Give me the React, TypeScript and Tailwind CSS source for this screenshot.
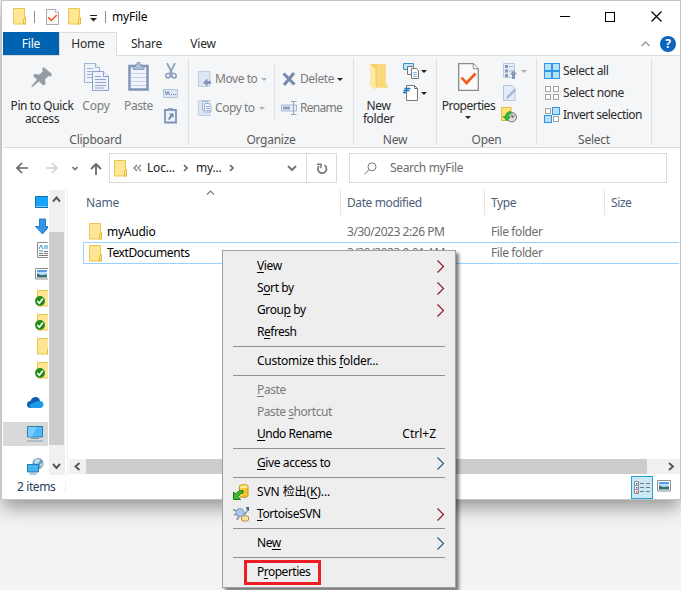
import React from 'react';
import clsx from 'clsx';

const FolderIcon = ({ className }: { className?: string }) => (
  <svg className={clsx('shrink-0', className)} width="14" height="17" viewBox="0 0 14 17">
    <path d="M.5.500h11v9h1v6.500H.5z" fill="#ffe694" stroke="#e9c750" />
    <path d="M10.500 16v-4.500l1-1.500h1v6z" fill="#ffe694" stroke="#e3b83c" />
  </svg>
);

const Caret = ({ className }: { className?: string }) => (
  <svg className={clsx('shrink-0', className)} width="6" height="3" viewBox="0 0 6 3">
    <path d="M0 0h6L3 3z" fill="currentColor" />
  </svg>
);

const PropertiesIcon = ({ width, height }: { width: number; height: number }) => (
  <svg width={width} height={height} viewBox="0 0 21 28" preserveAspectRatio="none">
    <path d="M.7.700h14.600l5 5v21.600H.7z" fill="#fafafa" stroke="#8a8a8a" strokeWidth="1.300" />
    <path d="M15.300.700v5h5" fill="#fff" stroke="#8a8a8a" />
    <path d="M3.500 14.500l5 5.500 9-9.500" fill="none" stroke="#f4591b" strokeWidth="2.600" />
  </svg>
);

const PinIcon = () => (
  <svg width="22" height="22" viewBox="0 0 22 22">
    <path d="M12.500 1l8.500 7-1 2.500-2.500-.500-3.500 3.500.5 4.500-2 1.500-4.500-4L1.500 21H.5v-1l5.500-6.500L2 10l1.500-2 5 .5 3.500-3.500-1-2z" fill="#929da6" />
  </svg>
);

const CopyIcon = () => (
  <svg width="25" height="28" viewBox="0 0 25 28">
    <g fill="#eef3fb" stroke="#9fb2d3">
      <path d="M.5.500h11l4 4V19.500H.5z" />
      <path d="M11.500.500v4h4" />
      <path d="M3 5.500h6M3 8.500h6M3 11.500h5M3 14.500h5" />
      <path d="M8.500 8.500h11l5 5v14h-16z" stroke="#8ea3c8" />
      <path d="M19.500 8.500v5h5M11 13.500h6M11 16.500h11M11 19.500h11M11 22.500h11M11 25h9" stroke="#8ea3c8" />
    </g>
  </svg>
);

const PasteIcon = () => (
  <svg width="21" height="29" viewBox="0 0 21 29">
    <path d="M1.500 4h18v23.500h-18z" fill="#f1f5fb" stroke="#8194b8" strokeWidth="2.500" />
    <path d="M5 4.500h2.500V2.500h1.500V.500h3v2h1.500v2H16v3H5z" fill="#aebcd4" stroke="#8194b8" strokeWidth=".8" />
    <path d="M3 11.500h15M3 15.500h15M3 19.500h15M3 23.500h15" stroke="#c4d0e3" />
  </svg>
);

const CutIcon = () => (
  <svg width="12" height="16" viewBox="0 0 12 16">
    <g fill="none" stroke="#8ea0c0">
      <path d="M2 0l5.500 11M10 0L4.500 11" strokeWidth="1.800" />
      <circle cx="3" cy="12.700" r="2.200" strokeWidth="1.700" />
      <circle cx="9" cy="12.700" r="2.200" strokeWidth="1.700" />
    </g>
  </svg>
);

const CopyPathIcon = () => (
  <svg width="15" height="9" viewBox="0 0 15 9">
    <path d="M.5.500h14v8H.5z" fill="#dde6f3" stroke="#b5c4dc" />
    <path d="M2 2l1.500 4L5 2.500 6.500 6" fill="none" stroke="#6e82a8" />
    <path d="M8 5.500h1M10 5.500h1M12 5.500h1" stroke="#6e82a8" />
  </svg>
);

const PasteShortcutIcon = () => (
  <svg width="13" height="17" viewBox="0 0 13 17">
    <path d="M1 3h11v12.500H1z" fill="#eef3fa" stroke="#8194b8" strokeWidth="1.800" />
    <path d="M4 1h5v3H4z" fill="#8fa1c2" />
    <path d="M5 6.500h4.500V11L8 9.500 5.500 13 4 12l2.500-4z" fill="#7186ac" />
  </svg>
);

const MoveIcon = () => (
  <svg width="14" height="16" viewBox="0 0 14 16">
    <path d="M.5.500h11.500V15.500H.5z" fill="#dce6f4" stroke="#bfcde3" />
    <path d="M5 11.500l4.500-4v2.500H13v3H9.500v2.500z" fill="#8397bb" />
  </svg>
);

const CopyToIcon = () => (
  <svg width="14" height="16" viewBox="0 0 14 16">
    <path d="M.5.500h11.500V15.500H.5z" fill="#dce6f4" stroke="#bfcde3" />
    <path d="M4.500 1.500h5v9h-5z" fill="#f2f6fc" stroke="#9fb2d3" />
    <path d="M6.500 3.500h4.500l2 2v6.500H6.500z" fill="#f2f6fc" stroke="#9fb2d3" />
    <path d="M8 6.500h4M8 8.500h4M8 10.500h4" stroke="#9fb2d3" />
  </svg>
);

const DeleteIcon = () => (
  <svg width="14" height="14" viewBox="0 0 14 14">
    <path d="M1.500 1.500l11 11M12 1L2 13" stroke="#7589ad" strokeWidth="3" />
  </svg>
);

const RenameIcon = () => (
  <svg width="16" height="14" viewBox="0 0 16 14">
    <path d="M.5 4h15v6H.5z" fill="#e8eef7" stroke="#a5b6d2" />
    <path d="M2 5.500h7v3H2z" fill="#8ea2c4" />
    <path d="M10 .500h2.500v13H10M15.500.500h-3v13h3" fill="none" stroke="#8ea2c4" />
  </svg>
);

const NewFolderIcon = () => (
  <svg width="20" height="28" viewBox="0 0 20 28">
    <path d="M1 1h15.500v18l2.500 5.500H8L1 22z" fill="#f4cf68" />
    <path d="M8 1h8.500v18l2.500 5.500H8z" fill="#f9d979" />
    <path d="M1 1l5.500 5v21.500L1 23z" fill="#ffe9a6" />
  </svg>
);

const NewItemIcon = () => (
  <svg width="16" height="16" viewBox="0 0 16 16">
    <path d="M.5.500h10v6H.5z" fill="#bfe3f7" stroke="#3b95bd" />
    <path d="M4.500 3.500h5l2 2v6h-7z" fill="#f6f6f6" stroke="#777" />
    <path d="M8.500 5.500h5l2 2v8h-7z" fill="#fff" stroke="#777" />
    <path d="M10 9.500h4M10 11.500h4M10 13.500h4" stroke="#87bde6" />
  </svg>
);

const EasyAccessIcon = () => (
  <svg width="16" height="16" viewBox="0 0 16 16">
    <path d="M3.500.500h8l3 3v12h-11z" fill="#fff" stroke="#777" />
    <path d="M11.500.500v3h3" fill="none" stroke="#777" />
    <path d="M1.500 3.500h6M.5 5.500h6M0 7.500h4" stroke="#1b72c0" strokeWidth="1.300" />
  </svg>
);

const OpenIcon = () => (
  <svg width="14" height="16" viewBox="0 0 14 16">
    <path d="M.5.500h11v14H.5z" fill="#e7eef7" stroke="#b9c8df" />
    <path d="M2 2h3v3H2zM2 6.500h3v3H2zM2 11h3v3H2z" fill="#8397bb" />
    <path d="M6 3.500h4M6 8h3" stroke="#a7b7d2" />
    <path d="M10.500 7l3.500 4.500h-2V16H9v-4.500H7z" fill="#8397bb" />
  </svg>
);

const EditIcon = () => (
  <svg width="14" height="16" viewBox="0 0 14 16">
    <path d="M.5.500h8.500l3 3v12H.5z" fill="#e4ecf7" stroke="#b4c4dd" />
    <path d="M3 14l1-3 7.500-7.500 1.500 2L5.500 13z" fill="#a4b6d3" />
  </svg>
);

const HistoryIcon = () => (
  <svg width="16" height="16" viewBox="0 0 16 16">
    <path d="M.5.500h9.500V13.500H.5z" fill="#ffe17b" stroke="#e3bd3c" />
    <circle cx="10.800" cy="10.200" r="4.700" fill="#ddd" stroke="#777" />
    <path d="M11 7.500v3l2.500-2" fill="none" stroke="#555" />
    <path d="M10 4.500C6 4.500 4.500 7 4.500 9.500H2L6 14l3.500-4.500H7.500c0-2 1-2.500 2.500-2.500z" fill="#35b53a" stroke="#1a8d22" strokeWidth=".6" />
  </svg>
);

const squares = [
  [0, 0],
  [8, 0],
  [0, 8],
  [8, 8],
];

const SelectIcon = ({ picked }: { picked: boolean[] }) => (
  <svg width="16" height="16" viewBox="0 0 16 16">
    {squares.map(([x, y], i) =>
      picked[i] ? (
        <rect key={i} x={x + 0.5} y={y + 0.5} width="7" height="7" fill="#b9e0fb" stroke="#2f96e6" />
      ) : (
        <rect key={i} x={x + 1.5} y={y + 1.5} width="5" height="5" fill="#fcfcfc" stroke="#a3a3a3" />
      )
    )}
  </svg>
);

const MonitorIcon = () => (
  <svg width="17" height="16" viewBox="0 0 17 16">
    <path d="M.5.500h15v10.500H.5z" fill="#4cb9fb" stroke="#2f7fae" />
    <path d="M1 1h9L5 10.500H1z" fill="#79cdff" />
    <path d="M4 12.500h8" stroke="#7c99aa" />
    <path d="M0 15h16" stroke="#7ca5c2" />
  </svg>
);

const PictureIcon = () => (
  <svg className="shrink-0" width="14" height="12" viewBox="0 0 14 12">
    <path d="M.5.500h13v10.500H.5z" fill="#fff" stroke="#8f8f8f" />
    <path d="M2 2h10v7.500H2z" fill="#b9def9" />
    <path d="M2 2h10v2H2z" fill="#5b9bea" />
    <path d="M2 5.500l4 1.500 6-.5v3H2z" fill="#3d7270" />
  </svg>
);

const SyncedFolderIcon = () => (
  <svg className="shrink-0" width="16" height="17" viewBox="0 0 16 17">
    <path d="M2.500.500h13v15.500h-13z" fill="#ffe694" stroke="#ecc846" />
    <circle cx="5" cy="11" r="5" fill="#238a17" />
    <path d="M2.300 11l2 2.200L8 8.500" fill="none" stroke="#fff" strokeWidth="1.700" />
  </svg>
);

const CloudIcon = () => (
  <svg width="17" height="11" viewBox="0 0 17 11">
    <path d="M3.500 11C1 11 0 9.500 0 7.500 0 5.500 1.500 4 3.500 4 4.500 1 6.500 0 8.500 0 11 0 12.500 1.500 13 4L9 8z" fill="#0a5fb4" />
    <path d="M4 11l-2-3 7-3.500 3.500-.5C15 4 16.500 5.500 16.500 7.500S15 11 13 11z" fill="#1f9be8" />
  </svg>
);

const NetworkIcon = () => (
  <svg width="17" height="17" viewBox="0 0 17 17">
    <circle cx="11" cy="5.500" r="5.500" fill="#6b9fbd" />
    <path d="M8 2c2-2 5-1 5 1l-3 3-3-1zM13 6l3-1-2 5z" fill="#bfe2ef" />
    <path d="M.5 6.500h11v7.500H.5z" fill="#43b4f4" stroke="#2b78a6" />
    <path d="M2.500 16h7" stroke="#6d91aa" />
  </svg>
);

const SvnCheckoutIcon = () => (
  <svg width="16" height="16" viewBox="0 0 16 16">
    <path d="M6.500 2.500c0-2.500 8.500-2.500 8.500 0v9c0 2.500-8.500 2.500-8.500 0z" fill="#f7c52d" stroke="#c98f12" />
    <ellipse cx="10.750" cy="2.700" rx="3.700" ry="1.500" fill="#fdeb9a" />
    <path d="M8.500 5v7" stroke="#fde68a" strokeWidth="1.500" />
    <path d="M.5 15.500V8l2 2c2-2.500 4-3.500 7.500-3.500v2.500c-2.500.5-4 1.500-5 3.500l2.500 3z" fill="#3dbb31" stroke="#15780f" />
  </svg>
);

const TortoiseIcon = () => (
  <svg width="17" height="15" viewBox="0 0 17 15">
    <path d="M0 2.500l3.500 1.500M1 8l3-1M4 13l2-4M11 8l3-4" fill="none" stroke="#8d95a3" strokeWidth="1.800" />
    <circle cx="7" cy="5.500" r="4" fill="#a9c8f6" stroke="#8394b8" />
    <path d="M13 0h3v4l-2-.5z" fill="#3f6787" />
    <path d="M8.500 10c0-1.500 7-1.500 7 0v3c0 1.500-7 1.500-7 0z" fill="#f8e2a0" stroke="#b48c3c" />
  </svg>
);

const Arrow = ({ d, width, height, color, stroke = 1.6 }: { d: string; width: number; height: number; color: string; stroke?: number }) => (
  <svg className="shrink-0" width={width} height={height} viewBox={`0 0 ${width} ${height}`}>
    <path d={d} fill="none" stroke={color} strokeWidth={stroke} />
  </svg>
);

interface RibbonGroupProps {
  label: string;
  className: string;
  children: React.ReactNode;
}

const RibbonGroup = ({ label, className, children }: RibbonGroupProps) => (
  <div className={clsx('flex h-[87px] shrink-0 flex-col border-r border-[#e0e1e2]', className)}>
    <div className="flex h-[74px] shrink-0 items-start">{children}</div>
    <div className="text-center leading-[14px] tracking-[-0.25px] text-[#5a5a5a]">
      <span className="relative top-px">{label}</span>
    </div>
  </div>
);

interface BigButtonProps {
  icon: React.ReactNode;
  className: string;
  lines: string[];
  children?: React.ReactNode;
}

const BigButton = ({ icon, className, lines, children }: BigButtonProps) => (
  <div className={clsx('flex shrink-0 flex-col items-center whitespace-nowrap text-center leading-[13px]', className)}>
    <div className="flex h-[34px] items-center justify-center pb-[1px] pt-1">{icon}</div>
    <div className="flex flex-col items-center pt-[7px]">
      {lines.map((line) => (
        <div key={line} className="h-[13px]">
          {line}
        </div>
      ))}
      {children}
    </div>
  </div>
);

const TitleBar = () => (
  <div className="flex h-[31px] items-center pl-[10px]">
    <FolderIcon />
    <div className="ml-[7px] h-3 w-px bg-[#8f8f8f]" />
    <div className="ml-[11px]">
      <PropertiesIcon width={13} height={16} />
    </div>
    <FolderIcon className="ml-[9px]" />
    <svg className="ml-2 mt-[3px]" width="7" height="7" viewBox="0 0 7 7">
      <path d="M0 .500h7" stroke="#222" />
      <path d="M0 3h7L3.500 6.500z" fill="#222" />
    </svg>
    <div className="ml-2 h-3 w-px bg-[#8f8f8f]" />
    <div className="ml-[6px] tracking-[-0.2px] text-black">myFile</div>
    <div className="ml-auto flex items-center gap-[35px] pr-[18px]">
      <div className="h-px w-[10px] bg-black" />
      <div className="h-[10px] w-[10px] border border-black" />
      <div className="ml-px">
        <Arrow d="M.5.500l10 10M10.500.500l-10 10" width={11} height={11} color="#000" stroke={1.2} />
      </div>
    </div>
  </div>
);

const Tabs = () => (
  <div className="flex h-6 items-stretch border-b border-[#dadbdc] leading-[23px] tracking-[-0.2px]">
    <div className="w-14 bg-[#0063b1] text-center text-white">File</div>
    <div className="-mb-px w-[58px] border-x border-t border-[#dadbdc] bg-[#f5f6f7] text-center leading-[22px]">Home</div>
    <div className="w-[59px] text-center">Share</div>
    <div className="w-[54px] text-center">View</div>
    <div className="ml-auto flex items-center gap-[10px] pr-1">
      <Arrow d="M.5 5L4.500 1l4 4" width={9} height={6} color="#999" stroke={1.3} />
      <div className="flex h-4 w-4 items-center justify-center rounded-full bg-[#0b64c0] text-[12px] font-bold leading-none text-white">?</div>
    </div>
  </div>
);

const Ribbon = () => (
  <div className="flex h-[92px] border-b border-[#dadbdc] bg-[#f5f6f7] pt-[2px]">
    <RibbonGroup label="Clipboard" className="w-[186px]">
      <BigButton icon={<PinIcon />} className="ml-[2px] w-[74px]" lines={['Pin to Quick', 'access']} />
      <BigButton icon={<CopyIcon />} className="w-[34px] tracking-[-0.2px] text-[#7b7b7b]" lines={['Copy']} />
      <BigButton icon={<PasteIcon />} className="ml-[5px] w-[41px] text-[#7b7b7b]" lines={['Paste']} />
      <div className="ml-1 flex flex-col items-center pt-[5px]">
        <CutIcon />
        <div className="mb-[9px] mt-[10px]">
          <CopyPathIcon />
        </div>
        <PasteShortcutIcon />
      </div>
    </RibbonGroup>
    <RibbonGroup label="Organize" className="w-[165px] text-[#7b7b7b]">
      <div className="flex w-[85px] shrink-0 flex-col gap-[13px] pl-[9px] pt-[13px] leading-4 tracking-[-0.45px]">
        <div className="flex items-center">
          <MoveIcon />
          <span className="ml-[3px] w-[46px] shrink-0">Move to</span>
          <Caret className="text-[#b0b0b0]" />
        </div>
        <div className="flex items-center">
          <CopyToIcon />
          <span className="ml-[3px] w-[44px] shrink-0">Copy to</span>
          <Caret className="text-[#b0b0b0]" />
        </div>
      </div>
      <div className="mt-[7px] h-[55px] w-px bg-[#e0e1e2]" />
      <div className="flex flex-col gap-[13px] pl-[6px] pt-[13px] leading-4">
        <div className="flex items-center">
          <div className="flex w-4 justify-center">
            <DeleteIcon />
          </div>
          <span className="ml-[3px] w-[37px] shrink-0">Delete</span>
          <Caret className="text-[#222]" />
        </div>
        <div className="flex items-center tracking-[-0.7px]">
          <RenameIcon />
          <span className="ml-[3px]">Rename</span>
        </div>
      </div>
    </RibbonGroup>
    <RibbonGroup label="New" className="w-[83px]">
      <BigButton icon={<NewFolderIcon />} className="w-[49px]" lines={['New', 'folder']} />
      <div className="flex flex-col gap-[6px] pt-[5px]">
        <div className="flex items-center gap-[2px]">
          <NewItemIcon />
          <Caret className="text-[#222]" />
        </div>
        <div className="flex items-center gap-[2px]">
          <EasyAccessIcon />
          <Caret className="text-[#222]" />
        </div>
      </div>
    </RibbonGroup>
    <RibbonGroup label="Open" className="w-[100px]">
      <BigButton icon={<PropertiesIcon width={21} height={28} />} className="w-[63px] tracking-[-0.5px]" lines={['Properties']}>
        <Caret className="mt-[4px] text-[#222]" />
      </BigButton>
      <div className="flex flex-col gap-[6px] pt-[5px]">
        <div className="flex items-center gap-[4px] pl-[3px]">
          <OpenIcon />
          <Caret className="text-[#b0b0b0]" />
        </div>
        <div className="pl-[3px]">
          <EditIcon />
        </div>
        <div className="pl-px">
          <HistoryIcon />
        </div>
      </div>
    </RibbonGroup>
    <RibbonGroup label="Select" className="w-[115px]">
      <div className="flex flex-col gap-[6px] whitespace-nowrap pl-[7px] pt-[5px] leading-4">
        <div className="flex items-center gap-[3px]">
          <SelectIcon picked={[true, true, true, true]} />
          <span>Select all</span>
        </div>
        <div className="flex items-center gap-[3px]">
          <SelectIcon picked={[false, false, false, false]} />
          <span>Select none</span>
        </div>
        <div className="flex items-center gap-[3px] tracking-[-0.5px]">
          <SelectIcon picked={[false, true, true, false]} />
          <span>Invert selection</span>
        </div>
      </div>
    </RibbonGroup>
  </div>
);

const AddressBar = () => (
  <div className="flex h-[42px] items-start pl-[13px] pt-[5px]">
    <div className="flex h-[30px] w-[93px] items-center">
      <Arrow d="M6 1L1 6l5 5M1 6h11" width={12} height={12} color="#666" />
      <div className="ml-[18px]">
        <Arrow d="M6 1l5 5-5 5M11 6H0" width={12} height={12} color="#d0d0d0" />
      </div>
      <div className="ml-[14px]">
        <Arrow d="M.5 1L3 3.500 5.500 1" width={6} height={5} color="#777" />
      </div>
      <div className="ml-[12px] mt-px">
        <Arrow d="M1 6l5-5 5 5M6 1v11" width={12} height={12} color="#666" stroke={1.8} />
      </div>
    </div>
    <div className="flex h-[30px] w-[228px] items-center border border-[#d9d9d9] tracking-[-0.2px] text-[#222]">
      <FolderIcon className="ml-1" />
      <div className="ml-[5px]">
        <Arrow d="M4 1L1 4l3 3M8 1L5 4l3 3" width={8} height={8} color="#777" stroke={1.2} />
      </div>
      <span className="ml-[6px] w-[36px]">Loc...</span>
      <Arrow d="M1 1l3 3-3 3" width={5} height={8} color="#666" />
      <span className="ml-[8px] w-[33px]">my...</span>
      <Arrow d="M1 1l3 3-3 3" width={5} height={8} color="#666" />
      <div className="ml-auto mr-[9px]">
        <Arrow d="M1 1l4 4 4-4" width={10} height={7} color="#777" stroke={2} />
      </div>
      <div className="flex h-full w-[30px] items-center justify-center border-l border-[#d9d9d9]">
        <svg width="12" height="13" viewBox="0 0 12 13">
          <path d="M8.500 3.200A4.300 4.300 0 1 1 3 4" fill="none" stroke="#777" strokeWidth="1.700" />
          <path d="M1 2.300h4v4" fill="none" stroke="#777" strokeWidth="1.500" />
        </svg>
      </div>
    </div>
    <div className="ml-3 flex h-[30px] w-[318px] items-center border border-[#d9d9d9] pl-[14px] text-[#6d6d6d]">
      <svg width="13" height="13" viewBox="0 0 13 13">
        <circle cx="8" cy="4.800" r="4" fill="none" stroke="#777" />
        <path d="M5 7.700L.5 12.300" stroke="#777" />
      </svg>
      <span className="ml-[13px] tracking-[-0.35px]">Search myFile</span>
    </div>
  </div>
);

const SideItem = ({ className, children }: { className?: string; children: React.ReactNode }) => (
  <div className={clsx('flex h-6 shrink-0 items-center', className)}>{children}</div>
);

const Sidebar = () => (
  <div className="flex h-[285px] w-[62px] shrink-0">
    <div className="mr-px flex w-[45px] flex-col overflow-hidden">
      <SideItem className="pl-8">
        <svg className="shrink-0" width="17" height="12" viewBox="0 0 17 12">
          <path d="M.5.500h16v11H.5z" fill="#16a3fb" stroke="#0b73b8" />
          <path d="M1 10.500h11" stroke="#7fd0ff" />
        </svg>
      </SideItem>
      <SideItem className="pl-8">
        <svg className="shrink-0" width="14" height="17" viewBox="0 0 14 17">
          <path d="M4.500 1h6v7.500h3.500L7.500 16 .5 8.500h4z" fill="#3a94e4" stroke="#2478c6" />
        </svg>
      </SideItem>
      <SideItem className="pl-[34px]">
        <svg className="shrink-0" width="13" height="16" viewBox="0 0 13 16">
          <path d="M.5.500h10l2 2v13H.5z" fill="#fff" stroke="#8a8a8a" />
          <path d="M2 7l2-4 2 4M7 4h4M7 6h4M2 9h4" stroke="#3192c9" fill="none" />
          <path d="M7 9.500h4M2 11.500h4M2 13.500h9M7 11.500h4" stroke="#777" />
        </svg>
      </SideItem>
      <SideItem className="pl-8">
        <PictureIcon />
      </SideItem>
      <SideItem className="pl-8">
        <SyncedFolderIcon />
      </SideItem>
      <SideItem className="pl-8">
        <SyncedFolderIcon />
      </SideItem>
      <SideItem className="pl-[34px]">
        <FolderIcon />
      </SideItem>
      <SideItem className="pl-8">
        <SyncedFolderIcon />
      </SideItem>
      <SideItem className="mt-2 pl-6">
        <CloudIcon />
      </SideItem>
      <SideItem className="mt-2 bg-[#d9d9d9] pl-6">
        <MonitorIcon />
      </SideItem>
      <SideItem className="mt-2 pl-6">
        <NetworkIcon />
      </SideItem>
    </div>
    <div className="flex w-4 flex-col items-center bg-[#f0f0f0] pr-px">
      <div className="flex h-[42px] items-start pt-[6px]">
        <Arrow d="M1 5.500l3.500-4 3.500 4" width={9} height={7} color="#555" stroke={1.9} />
      </div>
      <div className="h-[213px] w-[15px] bg-[#cdcdcd]" />
      <div className="flex flex-1 items-center pt-3">
        <Arrow d="M1 1l3.500 4L8 1" width={9} height={7} color="#555" stroke={1.9} />
      </div>
    </div>
  </div>
);

const files = [
  { name: 'myAudio', date: '3/30/2023 2:26 PM', type: 'File folder', focused: false },
  { name: 'TextDocuments', date: '3/30/2023 9:01 AM', type: 'File folder', focused: true },
];

const FileList = () => (
  <div className="flex flex-1 flex-col border-l border-[#eee]">
    <div className="ml-[2px] flex h-[25px] items-center leading-[25px] text-[#4c607a]">
      <div className="flex h-full w-[271px] border-r border-[#e5e5e5] pl-4">
        <span className="w-[33px] tracking-[-0.2px]">Name</span>
        <div className="ml-[87px]">
          <Arrow d="M1 4.500L4.500 1 8 4.500" width={9} height={5} color="#777" stroke={1.1} />
        </div>
      </div>
      <div className="h-full w-36 border-r border-[#e5e5e5] pl-[6px]">Date modified</div>
      <div className="h-full w-[120px] border-r border-[#e5e5e5] pl-[6px]">Type</div>
      <div className="pl-[6px]">Size</div>
    </div>
    <div className="mt-[6px] flex flex-col pl-[15px] pr-px">
      {files.map((file) => (
        <div
          key={file.name}
          className={clsx('flex items-center border-[#99d1ff] text-[#6d6d6d]', file.focused ? 'h-[22px] border-y border-l pl-[5px]' : 'h-[21px] pl-[6px]')}
        >
          <FolderIcon />
          <span className={clsx('ml-[4px] w-[240px] text-black', !file.focused && 'tracking-[-0.25px]')}>{file.name}</span>
          <span className="w-36 tracking-[-0.45px]">{file.date}</span>
          <span>{file.type}</span>
        </div>
      ))}
    </div>
    <div className="mb-px ml-px mt-auto flex h-[15px] items-center bg-[#f0f0f0] pl-[5px]">
      <Arrow d="M5.500 1l-4 3.500 4 3.500" width={7} height={9} color="#555" stroke={1.9} />
      <div className="ml-[5px] h-[15px] w-[561px] bg-[#cdcdcd]" />
      <div className="ml-auto mr-[5px]">
        <Arrow d="M1 1l4 3.500-4 3.500" width={7} height={9} color="#555" stroke={1.9} />
      </div>
    </div>
  </div>
);

const StatusBar = () => (
  <div className="flex h-6 items-center pl-[14px] text-[#28405e]">
    <span className="w-10">2 items</span>
    <div className="ml-[8px] h-3 w-px bg-[#eee]" />
    <div className="ml-auto flex h-[23px] w-[22px] items-center justify-center border border-[#2a9fd6] bg-[#cbe8f7]">
      <svg width="16" height="13" viewBox="0 0 16 13">
        <path d="M.5.500h4v4h-4zM.5 4.500h4v4h-4zM.5 8.500h4v4h-4z" fill="#fff" stroke="#8f8f8f" />
        <path d="M6 2.500h4M12 2.500h4M6 6.500h4M12 6.500h4M6 10.500h4M12 10.500h4" stroke="#777" />
        <path d="M2 10h1.500v1.500H2z" fill="#c33" />
        <path d="M2 6h1.500v1.500H2zM2 2h1.500v1.500H2z" fill="#468" />
      </svg>
    </div>
    <div className="mb-[3px] ml-1 mr-[9px]">
      <PictureIcon />
    </div>
  </div>
);

const SubmenuArrow = ({ color }: { color: string }) => (
  <svg width="10" height="13" viewBox="0 0 10 13">
    <path d="M1.500.500l6 6-6 6" fill="none" stroke={color} strokeWidth="1.200" />
  </svg>
);

interface MenuItemProps {
  icon?: React.ReactNode;
  shortcut?: string;
  disabled?: boolean;
  arrow?: string;
  className?: string;
  children: React.ReactNode;
}

const MenuItem = ({ icon, shortcut, disabled, arrow, className, children }: MenuItemProps) => (
  <div className={clsx('flex h-[22px] items-center pl-[10px] pr-[9px]', disabled ? 'text-[#7a7a7a]' : 'text-black')}>
    <div className="w-6">{icon}</div>
    <div className={clsx('whitespace-nowrap', className)}>{children}</div>
    {shortcut && <div className="ml-auto mr-[10px] tracking-[0px]">{shortcut}</div>}
    {arrow && (
      <div className="ml-auto">
        <SubmenuArrow color={arrow} />
      </div>
    )}
  </div>
);

const Separator = () => (
  <div className="flex h-[7px] items-center px-[10px]">
    <div className="h-px flex-1 bg-[#919191]" />
  </div>
);

const Key = ({ children }: { children: React.ReactNode }) => <span className="underline underline-offset-2">{children}</span>;

const ContextMenu = () => (
  <div className="absolute left-[222px] top-[250px] h-[338px] w-[234px] border border-[#a0a0a0] bg-[#eee] py-1 shadow-[3px_3px_3px_rgba(0,0,0,0.5)]">
    <MenuItem arrow="#8d1c2c"><Key>V</Key>iew</MenuItem>
    <MenuItem arrow="#8d1c2c">S<Key>o</Key>rt by</MenuItem>
    <MenuItem arrow="#8d1c2c">Grou<Key>p</Key> by</MenuItem>
    <MenuItem className="tracking-[-0.5px]">R<Key>e</Key>fresh</MenuItem>
    <Separator />
    <MenuItem className="tracking-[-0.25px]">Customize this <Key>f</Key>older...</MenuItem>
    <Separator />
    <MenuItem disabled><Key>P</Key>aste</MenuItem>
    <MenuItem disabled className="tracking-[-0.45px]">Paste <Key>s</Key>hortcut</MenuItem>
    <MenuItem shortcut="Ctrl+Z" className="tracking-[-0.5px]"><Key>U</Key>ndo Rename</MenuItem>
    <Separator />
    <MenuItem arrow="#1f6292"><Key>G</Key>ive access to</MenuItem>
    <Separator />
    <MenuItem className="tracking-[-0.1px]" icon={<SvnCheckoutIcon />}>SVN 检出(<Key>K</Key>)...</MenuItem>
    <MenuItem icon={<TortoiseIcon />} arrow="#8d1c2c"><Key>T</Key>ortoiseSVN</MenuItem>
    <Separator />
    <MenuItem arrow="#1f6292">Ne<Key>w</Key></MenuItem>
    <Separator />
    <MenuItem className="tracking-[-0.5px]">P<Key>r</Key>operties</MenuItem>
    <div className="absolute left-[21px] top-[309px] h-[25px] w-[77px] border-[3px] border-[#ee1c25]" />
  </div>
);

export default function App() {
  return (
    <div className="relative h-[590px] w-[681px] overflow-hidden bg-[#f3f3f3] pl-[2px] pt-px font-['Noto_Sans','Noto_Sans_CJK_SC',sans-serif] text-[12px] tracking-[-0.4px] text-[#2b2b2b]">
      <div className="flex h-[498px] w-[678px] flex-col bg-white pl-px shadow-[0_0_0_1px_#c4c4c4,0_8px_18px_rgba(0,0,0,0.4)]">
        <TitleBar />
        <Tabs />
        <Ribbon />
        <AddressBar />
        <div className="flex h-[285px] gap-[2px]">
          <Sidebar />
          <FileList />
        </div>
        <StatusBar />
      </div>
      <ContextMenu />
    </div>
  );
}
